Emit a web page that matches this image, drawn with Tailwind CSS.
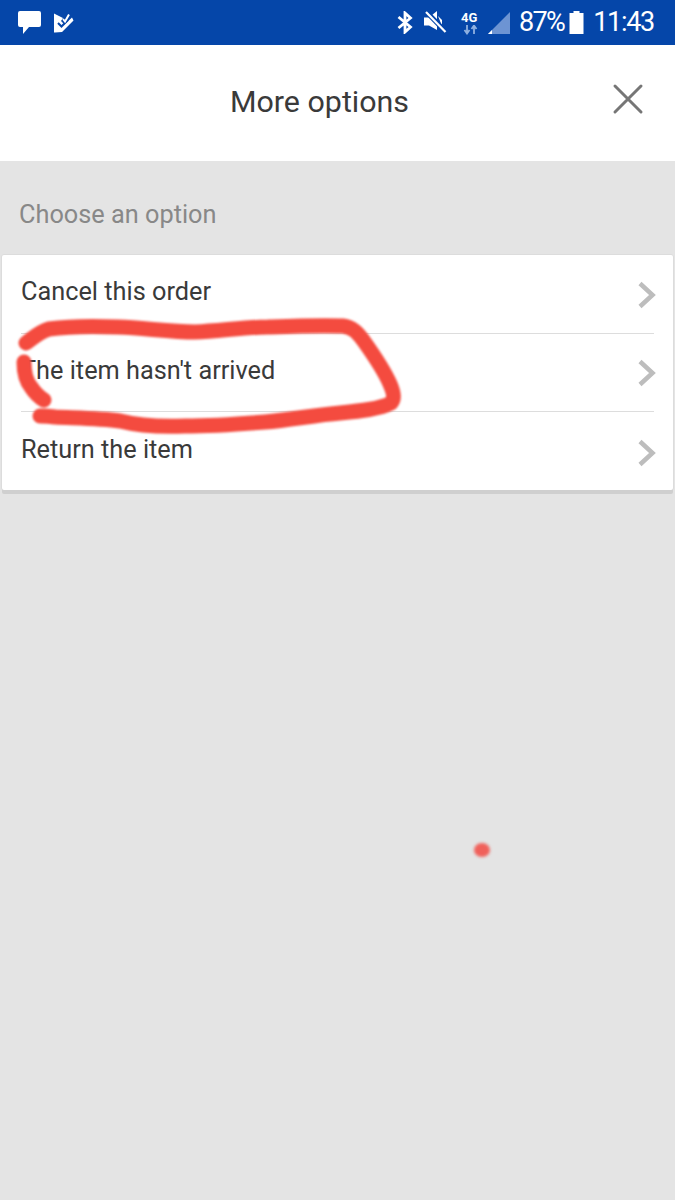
<!DOCTYPE html>
<html>
<head>
<meta charset="utf-8">
<script src="https://cdn.jsdelivr.net/npm/@tailwindcss/browser@4"></script>
</head>
<body class="m-0">
<div class="relative w-[675px] h-[1200px] overflow-hidden bg-[#e4e4e4] font-['Roboto',sans-serif] text-[#3a3a3a]">
  <!-- status bar -->
  <div class="h-[45px] bg-[#0546a9] flex items-center justify-between text-white">
    <div class="flex items-center pl-[17px] gap-[12px]">
      <svg width="25" height="25" viewBox="0 0 25 25"><path d="M3 1H22a2 2 0 0 1 2 2V15a2 2 0 0 1-2 2H12L6 24V17H3a2 2 0 0 1-2-2V3a2 2 0 0 1 2-2z" fill="#fff"/></svg>
      <svg width="20" height="22" viewBox="0 0 20 22"><path d="M0 1.500L9 6 7 9 10.500 12.500 18 5.500 19.500 8.500 8 20 1 20.500 0 20.500Z" fill="#fff"/><path d="M4 11L7.500 14.500 14 8" fill="none" stroke="#0546a9" stroke-width="2"/><path d="M9 7L11 9.500 15 2.500" fill="none" stroke="#fff" stroke-width="2"/></svg>
    </div>
    <div class="flex items-center pr-[21px]">
      <svg width="16" height="23" viewBox="0 0 16 23" class="mr-[11px]"><path d="M1.500 6L13.500 16 8 21V2L13.500 7 1.500 17" fill="none" stroke="#fff" stroke-width="2.800"/></svg>
      <svg width="23" height="23" viewBox="0 0 23 23" class="mr-[14px]"><path d="M0 6.500H5L13 0V19L5 14.500H0Z" fill="#fff"/><path d="M14 5L18 9V15Z" fill="#fff"/><path d="M3 1.500L22 21" stroke="#0546a9" stroke-width="5"/><path d="M2 1L21.500 21" stroke="#fff" stroke-width="2.200"/></svg>
      <div class="relative w-[19px] h-[26px] mr-[7px] leading-none">
        <span class="absolute left-0 top-[1px] text-[13px] font-bold">4G</span>
        <svg class="absolute left-[2px] top-[15px]" width="16" height="10" viewBox="0 0 16 10"><path d="M4 0V8M1.500 5L4 8.500 6.500 5M11 9V1M8.500 4L11 .5 13.500 4" fill="none" stroke="#8fb0e0" stroke-width="1.800"/></svg>
      </div>
      <svg width="24" height="24" viewBox="0 0 24 24" class="mr-[8px]"><path d="M23 1V23H1Z" fill="#6d94d3"/><path d="M1 23H5V19Z" fill="#fff"/></svg>
      <span class="text-[27px] leading-none tracking-[-1.6px] mr-[5px]">87%</span>
      <svg width="15" height="23" viewBox="0 0 15 23" class="mr-[9px]"><path d="M4.500 0H10.500V2H14.500V23H.5V2H4.500Z" fill="#fff"/></svg>
      <span class="text-[27px] leading-none tracking-[-1.3px]">11:43</span>
    </div>
  </div>
  <!-- header -->
  <div class="relative h-[116px] bg-white flex items-center justify-center pb-[2px] pr-[36px]">
    <h1 class="text-[30.400px] leading-none font-normal">More options</h1>
    <svg class="absolute left-[612px] top-[38px]" width="32" height="32" viewBox="0 0 32 32"><path d="M3 3L29 29M29 3L3 29" stroke="#767676" stroke-width="3" stroke-linecap="round"/></svg>
  </div>
  <!-- body -->
  <div class="pt-[39px] pl-[19px] h-[94px]"><p class="text-[25.300px] leading-[29px] text-[#888888]">Choose an option</p></div>
  <div class="mx-[2px] bg-white rounded-[2px] shadow-[0_4px_0_#cfcfcf,0_-1px_0_#dcdcdc,-1px_0_0_#dcdcdc,1px_0_0_#dcdcdc] h-[235px] flex flex-col px-[19px]">
    <div class="h-[78px] flex items-center justify-between border-b border-b-[#dddddd] box-content">
      <span class="text-[25.300px] leading-none mb-[5px]">Cancel this order</span>
      <svg class="mr-[-3px] mt-[1px] blur-[0.6px]" width="20" height="28" viewBox="0 0 20 28"><path d="M3 2.500L15.500 14 3 25.500" fill="none" stroke="#bdbdbd" stroke-width="4.500"/></svg>
    </div>
    <div class="h-[77px] flex items-center justify-between border-b border-b-[#dddddd] box-content">
      <span class="text-[25.300px] leading-none mb-[3px]">The item hasn't arrived</span>
      <svg class="mr-[-3px] mt-[1px] blur-[0.6px]" width="20" height="28" viewBox="0 0 20 28"><path d="M3 2.500L15.500 14 3 25.500" fill="none" stroke="#bdbdbd" stroke-width="4.500"/></svg>
    </div>
    <div class="h-[78px] flex items-center justify-between">
      <span class="text-[25.300px] leading-none mb-[3px]">Return the item</span>
      <svg class="mr-[-3px] mt-[3px] blur-[0.6px]" width="20" height="28" viewBox="0 0 20 28"><path d="M3 2.500L15.500 14 3 25.500" fill="none" stroke="#bdbdbd" stroke-width="4.500"/></svg>
    </div>
  </div>
  <!-- hand-drawn annotation -->
  <svg class="absolute left-0 top-0 pointer-events-none" width="675" height="1200" viewBox="0 0 675 1200">
    <g class="blur-[0.8px]" fill="none" stroke="#f44b3f" stroke-width="15" stroke-linecap="round" stroke-linejoin="round">
      <path d="M26 343C33 338 39 332 49 329C70 326 95 326 118 327C145 328 170 332 195 332C220 331 245 327 268 327C295 326 320 325 343 326C352 327 357 332 363 340C373 354 384 370 390 384C394 393 395 399 391 403C380 409 360 411 340 413C315 415 290 420 265 422C240 424 210 426 185 426C160 427 140 426 120 421C100 418 75 418 55 417C48 416 42 416 40 416"/>
      <path d="M24 362C24 372 26 381 31 387C35 393 39 397 44 400"/>
    </g>
    <ellipse class="blur-[1.500px]" cx="482" cy="850" rx="8" ry="7" fill="#f0605a"/>
  </svg>
</div>
</body>
</html>
